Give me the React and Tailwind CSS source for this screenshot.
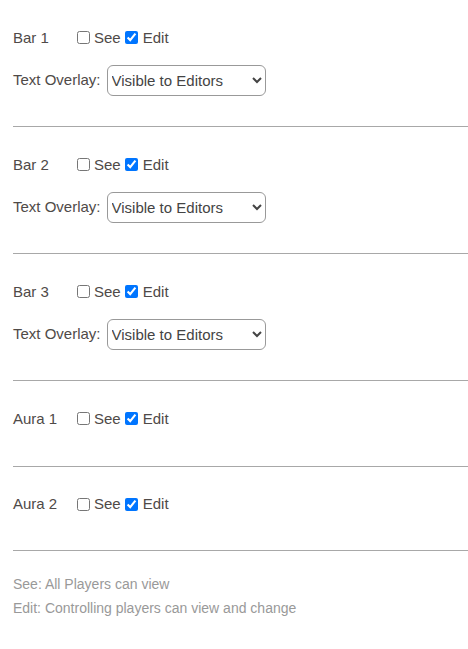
import React from "react";

const items = [
  { name: "Bar 1", overlay: true, pb: "pb-[30.5px]" },
  { name: "Bar 2", overlay: true, pb: "pb-[30.5px]" },
  { name: "Bar 3", overlay: true, pb: "pb-[30.5px]" },
  { name: "Aura 1", overlay: false, pb: "pb-[37px]" },
  { name: "Aura 2", overlay: false, pb: "pb-[36px]" },
];

const Permission = ({ name, overlay, pb }) => {
  return (
    <div className={`pt-[27.5px] border-b border-[#a8a8a8] ${pb}`}>
      <div className="flex items-center h-5 leading-5">
        <span className="w-16">{name}</span>
        <label className="flex items-center">
          <input type="checkbox" className="w-[13px] h-[13px] mr-[4px]" />
          See
        </label>
        <label className="flex items-center ml-[4px]">
          <input type="checkbox" defaultChecked className="w-[13px] h-[13px] mr-[5px]" />
          Edit
        </label>
      </div>
      {overlay && (
        <div className="flex items-center mt-[17px] h-[31px]">
          <span>Text Overlay:</span>
          <select
            defaultValue="editors"
            className="ml-[6px] h-[31px] w-[159px] border border-[#999] rounded-md pl-0 pr-1 text-[15px] text-[#444]"
          >
            <option value="editors">Visible to Editors</option>
            <option value="all">Visible to Everyone</option>
          </select>
        </div>
      )}
    </div>
  );
};

export default function App() {
  return (
    <div
      className="min-h-screen bg-white pl-[13px] text-[15px] text-[#4f4a48]"
      style={{ fontFamily: '"Liberation Sans", Arial, sans-serif' }}
    >
      {items.map((it) => (
        <Permission key={it.name} {...it} />
      ))}
      <div className="pt-[20.5px] text-[14px] leading-6 text-[#999]">
        <p>See: All Players can view</p>
        <p>Edit: Controlling players can view and change</p>
      </div>
    </div>
  );
}
